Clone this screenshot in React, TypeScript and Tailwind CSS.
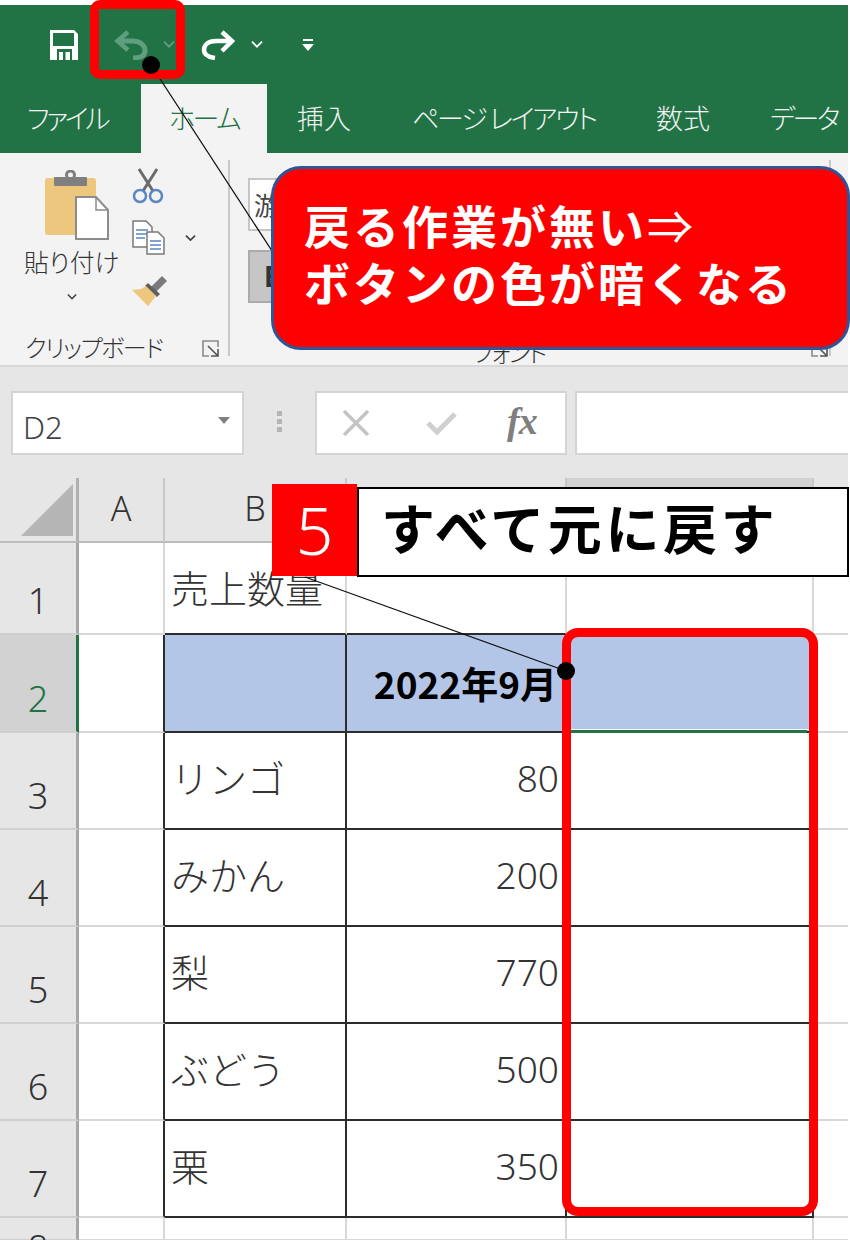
import React from "react";

const JP = "font-['Noto_Sans_CJK_JP','Noto_Sans',sans-serif]";

function SaveIcon() {
  return (
    <svg width="30" height="30" viewBox="0 0 30 30">
      <path d="M1 0h24l4 4v26H1z" fill="#fff" />
      <rect x="4" y="3" width="21" height="13" fill="#217346" />
      <rect x="8" y="19" width="15" height="11" fill="#217346" />
      <rect x="10" y="22" width="11" height="8" fill="#fff" />
      <rect x="14" y="22" width="2.5" height="8" fill="#217346" />
    </svg>
  );
}

function Chevron({ color, size = 12 }: { color: string; size?: number }) {
  return (
    <svg width={size} height={size * 0.7} viewBox="0 0 12 8">
      <path d="M1 1.5l5 5 5-5" fill="none" stroke={color} strokeWidth="1.8" />
    </svg>
  );
}

function UndoIcon() {
  return (
    <svg width="34" height="30" viewBox="0 0 34 30">
      <path d="M14 2L3.5 11 14 20" fill="none" stroke="#5f9f80" strokeWidth="4.5" />
      <path d="M4 11h14c8 0 13 4 13 10 0 4-3 7-12 7" fill="none" stroke="#5f9f80" strokeWidth="5" />
    </svg>
  );
}

function RedoIcon() {
  return (
    <svg width="34" height="30" viewBox="0 0 34 30">
      <path d="M21 2l10 9-10 10" fill="none" stroke="#fff" strokeWidth="4.5" />
      <path d="M30 11H15C7 11 3 15 3 20c0 4 4 7 11 8" fill="none" stroke="#fff" strokeWidth="4.5" />
    </svg>
  );
}

function CustomizeIcon() {
  return (
    <svg width="12" height="14" viewBox="0 0 12 14">
      <rect x="1" y="1" width="10" height="2" fill="#fff" />
      <path d="M0 6h12l-6 7z" fill="#fff" />
    </svg>
  );
}

function ClipboardIcon() {
  return (
    <svg width="64" height="70" viewBox="0 0 64 70">
      <rect x="0" y="8" width="51" height="57" rx="3" fill="#eec77f" />
      <rect x="9" y="7" width="33" height="9" rx="1" fill="#7f7f7f" />
      <circle cx="25.5" cy="5" r="4" fill="none" stroke="#7f7f7f" strokeWidth="3" />
      <path d="M31 27h20l12 13v29H31z" fill="#fff" stroke="#8c8c8c" strokeWidth="2" />
      <path d="M51 27v13h12" fill="none" stroke="#8c8c8c" strokeWidth="1.5" />
    </svg>
  );
}

function ScissorsIcon() {
  return (
    <svg width="32" height="36" viewBox="0 0 32 36">
      <path d="M7 1l14 22M25 1L11 23" stroke="#6b6b6b" strokeWidth="3" fill="none" />
      <circle cx="8" cy="28" r="6" fill="none" stroke="#5b87c0" strokeWidth="2.5" />
      <circle cx="24" cy="28" r="6" fill="none" stroke="#5b87c0" strokeWidth="2.5" />
    </svg>
  );
}

function CopyIcon() {
  return (
    <svg width="33" height="35" viewBox="0 0 33 35">
      <path d="M1 1h13l6 6v20H1z" fill="#fff" stroke="#7a7a7a" strokeWidth="1.5" />
      <path d="M4 10h12M4 14h12M4 18h9" stroke="#5b87c0" strokeWidth="1.5" />
      <path d="M15 12h11l6 6v16H15z" fill="#fff" stroke="#7a7a7a" strokeWidth="1.5" />
      <path d="M18 21h11M18 25h11M18 29h11" stroke="#5b87c0" strokeWidth="1.5" />
    </svg>
  );
}

function BrushIcon() {
  return (
    <svg width="36" height="32" viewBox="0 0 36 32">
      <path d="M19 12l6-6 5-5 5 5-5 5-6 6z" fill="#7a7a7a" />
      <path d="M16 8l12 11-3 3-12-11z" fill="#5f5f5f" />
      <path d="M14 11l10 10-8 10L0 15l9-1z" fill="#eec77f" />
    </svg>
  );
}

function Launcher() {
  return (
    <svg width="18" height="18" viewBox="0 0 18 18">
      <path d="M16 7V1H1v15h6" fill="none" stroke="#8a8a8a" strokeWidth="1.6" />
      <path d="M6 6l10 10M16 9v7H9" fill="none" stroke="#555" strokeWidth="1.6" />
    </svg>
  );
}

const rowHeights = ["h-[92px]", "h-[98px]", "h-[97px]", "h-[97px]", "h-[97px]", "h-[97px]", "h-[97px]", "h-[23px]"];
const rows: { b: string; c: string }[] = [
  { b: "売上数量", c: "" },
  { b: "", c: "2022年9月" },
  { b: "リンゴ", c: "80" },
  { b: "みかん", c: "200" },
  { b: "梨", c: "770" },
  { b: "ぶどう", c: "500" },
  { b: "栗", c: "350" },
  { b: "", c: "" },
];

function SheetRow({ index }: { index: number }) {
  const n = index + 1;
  const r = rows[index];
  const inTable = n >= 2 && n <= 7;
  const headerTop = n === 1;
  const right = inTable ? "border-r-[#2c2c2c]" : "border-r-[#d8d8d8]";
  const bottom = inTable || headerTop ? "border-b-[#2c2c2c]" : "border-b-[#d8d8d8]";
  const fill = n === 2 ? "bg-[#b4c6e7]" : "bg-white";
  return (
    <div className={`flex ${rowHeights[index]} overflow-hidden`}>
      <div
        className={`w-[79px] shrink-0 flex justify-center border-b-2 border-b-[#cfcfcf] border-r-[3px] ${
          n === 2 ? "bg-[#d2d2d2] border-r-[#217346] text-[#217346]" : "bg-[#e6e6e6] border-r-[#a6a6a6] text-[#333]"
        } text-[36px] leading-[48px] font-light font-['Noto_Sans',sans-serif] ${n === 8 ? "items-start pt-[6px]" : "items-end pb-[8px]"}`}
      >
        {n}
      </div>
      <div className={`w-[86px] shrink-0 bg-white border-b-2 border-b-[#d8d8d8] border-r-2 ${right}`} />
      <div
        className={`w-[182px] shrink-0 flex items-center pl-[6px] border-b-2 border-r-2 ${fill} ${bottom} ${right} text-[38px] font-light text-[#333] leading-none ${JP}`}
      >
        <span className={n === 1 ? "pb-[2px]" : "pb-[8px]"}>{r.b}</span>
      </div>
      <div
        className={`w-[220px] shrink-0 flex items-center justify-end border-b-2 border-r-2 ${fill} ${bottom} ${right} leading-none ${
          n === 2
            ? `text-[37px] font-bold text-black pr-[8px] ${JP}`
            : "text-[37px] font-light pr-[6px] pb-[6px] text-[#333] font-['Noto_Sans',sans-serif]"
        }`}
      >
        {r.c}
      </div>
      <div className={`w-[247px] shrink-0 border-b-2 border-r-2 ${fill} ${bottom} ${right}`} />
      <div className="flex-1 bg-white border-b-2 border-b-[#d8d8d8]" />
    </div>
  );
}

export default function App() {
  return (
    <div className={`relative w-[850px] h-[1240px] bg-white overflow-hidden ${JP}`}>
      <div className="w-[848px] pt-[5px]">
        {/* Title area */}
        <div className="bg-[#217346] h-[148px] flex flex-col">
          <div className="h-[79px] flex items-center">
            <div className="ml-[49px] flex"><SaveIcon /></div>
            <div className="ml-[35px] flex"><UndoIcon /></div>
            <div className="ml-[15px] flex"><Chevron color="#5f9f80" /></div>
            <div className="ml-[26px] flex"><RedoIcon /></div>
            <div className="ml-[16px] flex"><Chevron color="#fff" /></div>
            <div className="ml-[39px] flex"><CustomizeIcon /></div>
          </div>
          <div className="h-[69px] flex [font-feature-settings:'palt'] text-[27px] font-light text-[#f2f2f2] leading-none whitespace-nowrap">
            <div className="w-[141px] pl-[27px] pt-[20px] tracking-[-3.3px]">ファイル</div>
            <div className="w-[126px] bg-[#f3f3f3] text-[#217346] flex justify-center pt-[20px] tracking-[-2.5px]">ホーム</div>
            <div className="ml-[30px] w-[115px] pt-[20px]">挿入</div>
            <div className="w-[244px] pt-[20px] tracking-[-2.2px]">ページ レイアウト</div>
            <div className="w-[114px] pt-[20px]">数式</div>
            <div className="pt-[20px] tracking-[-2.5px]">データ</div>
          </div>
        </div>

        {/* Ribbon */}
        <div className="h-[214px] bg-[#f3f3f3] border-b-2 border-[#d8d8d8] flex pt-[7px]">
          <div className="w-[230px] h-[196px] shrink-0 border-r-2 border-[#c8c8c8] flex flex-col">
            <div className="h-[160px] shrink-0 flex">
              <div className="w-[107px] ml-[18px] flex flex-col items-center pt-[10px]">
                <div className="ml-[11px] flex"><ClipboardIcon /></div>
                <div className="mt-[5px] text-[25px] font-light leading-[32px] text-[#333] [font-feature-settings:'palt'] whitespace-nowrap">貼り付け</div>
                <div className="mt-[16px] flex"><Chevron color="#444" size={10} /></div>
              </div>
              <div className="flex flex-col ml-[7px] pt-[8px]">
                <ScissorsIcon />
                <div className="mt-[16px] flex items-center">
                  <CopyIcon />
                  <div className="ml-[20px] flex"><Chevron color="#444" size={11} /></div>
                </div>
                <div className="mt-[20px] flex"><BrushIcon /></div>
              </div>
            </div>
            <div className="flex items-start pl-[25px] pt-[11px]">
              <span className="text-[24px] font-light leading-[32px] text-[#333] [font-feature-settings:'palt'] tracking-[-1.5px] whitespace-nowrap">クリップボード</span>
              <div className="ml-[40px] mt-[9px] flex"><Launcher /></div>
            </div>
          </div>
          <div className="w-[601px] h-[196px] shrink-0 border-r-2 border-[#c8c8c8] pl-[18px] flex flex-col">
            <div className="mt-[18px] w-[70px] h-[53px] shrink-0 bg-white border-2 border-[#c6c6c6] text-[25px] text-[#444] pl-[4px] leading-[48px]">游</div>
            <div className="mt-[19px] w-[70px] h-[53px] shrink-0 bg-[#c6c6c6] border-2 border-[#ababab] text-[28px] font-bold text-[#333] pl-[14px] leading-[48px] font-['Noto_Sans',sans-serif]">B</div>
            <div className="mt-[33px] flex items-start">
              <span className="ml-[225px] text-[24px] font-light leading-[32px] text-[#333] [font-feature-settings:'palt'] tracking-[-1.5px] whitespace-nowrap">フォント</span>
              <div className="ml-[265px] mt-[4px] flex"><Launcher /></div>
            </div>
          </div>
        </div>

        {/* Formula bar */}
        <div className="h-[111px] bg-[#e6e6e6] flex items-start pt-[24px]">
          <div className="ml-[11px] w-[233px] h-[64px] bg-white border-2 border-[#d4d4d4] flex items-center justify-between pl-[10px] pr-[12px]">
            <span className="text-[31px] font-light text-[#444] font-['Noto_Sans',sans-serif] pt-[8px]">D2</span>
            <svg width="12" height="7" viewBox="0 0 12 7" className="mb-[6px]"><path d="M0 0h12L6 7z" fill="#808080" /></svg>
          </div>
          <div className="ml-[33px] w-[6px] flex flex-col gap-[3px] pt-[20px]">
            <div className="w-[5px] h-[5px] bg-[#b5b5b5]" />
            <div className="w-[5px] h-[5px] bg-[#b5b5b5]" />
            <div className="w-[5px] h-[5px] bg-[#b5b5b5]" />
          </div>
          <div className="ml-[32px] w-[252px] h-[64px] bg-white border-2 border-[#d4d4d4] flex items-center">
            <svg width="28" height="28" viewBox="0 0 28 28" className="ml-[25px]"><path d="M2 2l24 24M26 2L2 26" stroke="#c4c4c4" strokeWidth="3.5" fill="none" /></svg>
            <svg width="32" height="26" viewBox="0 0 32 26" className="ml-[55px]"><path d="M3 13l9 9L30 4" stroke="#cfcfcf" strokeWidth="5" fill="none" /></svg>
            <span className="ml-[50px] text-[38px] italic font-bold text-[#7f7f7f] font-['Liberation_Serif',serif] leading-none pb-[4px] tracking-[-1px]">fx</span>
          </div>
          <div className="ml-[8px] flex-1 h-[64px] bg-white border-2 border-r-0 border-[#d4d4d4]" />
        </div>

        {/* Column headers */}
        <div className="flex h-[65px] bg-[#e6e6e6] text-[34px] font-light text-[#333] font-['Noto_Sans',sans-serif] leading-none">
          <div className="w-[79px] shrink-0 border-b-2 border-b-[#bdbdbd] border-r-[3px] border-r-[#b0b0b0] flex items-end justify-end pr-[3px] pb-[5px]">
            <svg width="52" height="52" viewBox="0 0 52 52"><path d="M0 52L52 0v52z" fill="#b5b5b5" /></svg>
          </div>
          <div className="w-[86px] shrink-0 border-b-2 border-b-[#bdbdbd] border-r-2 border-r-[#c8c8c8] flex items-center justify-center pb-[4px]">A</div>
          <div className="w-[182px] shrink-0 border-b-2 border-b-[#bdbdbd] border-r-2 border-r-[#c8c8c8] flex items-center justify-center pb-[4px]">B</div>
          <div className="w-[220px] shrink-0 border-b-2 border-b-[#bdbdbd] border-r-2 border-r-[#c8c8c8]" />
          <div className="w-[247px] shrink-0 border-b-2 border-b-[#217346] border-r-2 border-r-[#c8c8c8] bg-[#d2d2d2]" />
          <div className="flex-1 border-b-2 border-b-[#bdbdbd]" />
        </div>

        {/* Rows */}
        {rows.map((_, i) => (
          <SheetRow key={i} index={i} />
        ))}
      </div>

      {/* Active cell underline */}
      <div className="absolute left-[571px] top-[729px] w-[238px] h-[1px] bg-white" />
      <div className="absolute left-[571px] top-[730px] w-[236px] h-[3px] bg-[#217346]" />

      {/* Leader lines */}
      <svg className="absolute left-0 top-0" width="850" height="1240" viewBox="0 0 850 1240">
        <line x1="151" y1="65" x2="274" y2="254" stroke="#111" strokeWidth="1.3" />
        <line x1="305" y1="577" x2="566" y2="671" stroke="#111" strokeWidth="1.3" />
      </svg>

      {/* Red highlight frames */}
      <div className="absolute left-[90px] top-0 w-[95px] h-[79px] border-[9px] border-[#ff0000] rounded-[10px]" />
      <div className="absolute left-[562px] top-[628px] w-[256px] h-[588px] border-[9px] border-[#ff0000] rounded-[16px]" />

      {/* Dots */}
      <div className="absolute left-[142px] top-[56px] w-[18px] h-[18px] rounded-full bg-black" />
      <div className="absolute left-[557px] top-[662px] w-[18px] h-[18px] rounded-full bg-black" />

      {/* Callout */}
      <div className="absolute left-[271px] top-[166px] w-[579px] h-[184px] bg-[#ff0000] border-[3px] border-[#2f5597] rounded-[30px] pl-[30px] pt-[27px] text-white text-[46px] leading-[57px] font-bold tracking-[3px] whitespace-nowrap">
        <div>戻る作業が無い<span className="font-normal">⇒</span></div>
        <div>ボタンの色が暗くなる</div>
      </div>

      {/* Step badge */}
      <div className="absolute left-[272px] top-[484px] flex items-start">
        <div className="w-[85px] h-[92px] bg-[#ff0000] text-white text-[66px] font-light leading-none flex items-center justify-center pb-[2px] font-['Noto_Sans',sans-serif]">5</div>
        <div className="mt-[3px] w-[492px] h-[90px] bg-white border-2 border-black pl-[22px] pb-[10px] flex items-center text-[54px] tracking-[3.6px] font-bold text-black leading-none whitespace-nowrap">すべて元に戻す</div>
      </div>
    </div>
  );
}
